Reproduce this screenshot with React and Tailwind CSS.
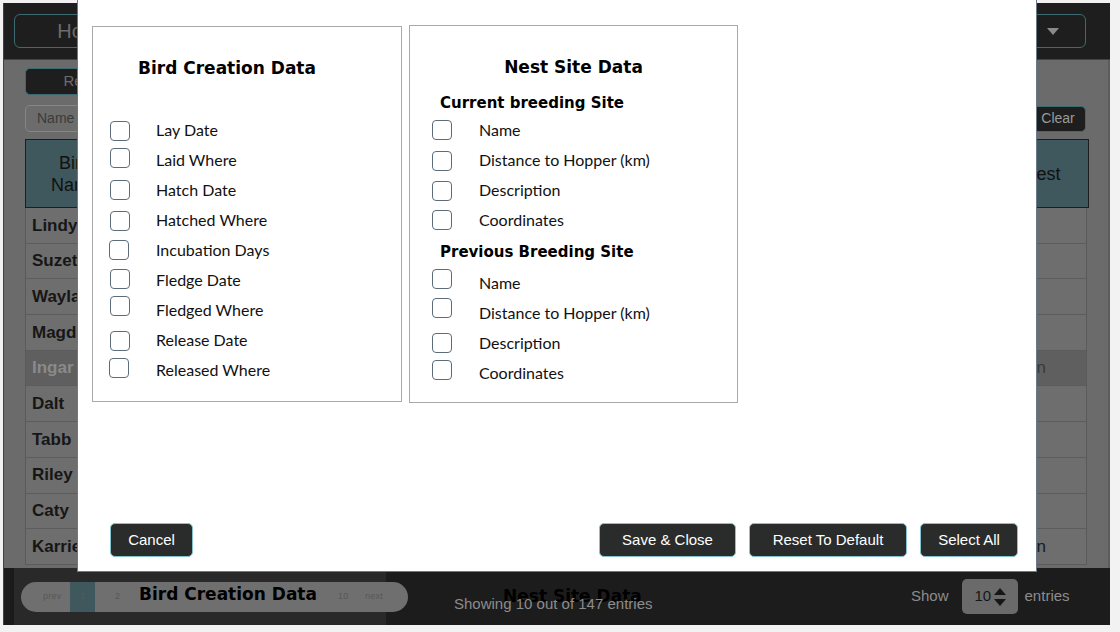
import React from 'react'

const birdFields = [
  { label: 'Lay Date', box: 'translate-y-[1px]' },
  { label: 'Laid Where', box: 'translate-y-[-2px]' },
  { label: 'Hatch Date', box: '' },
  { label: 'Hatched Where', box: 'translate-y-[1px]' },
  { label: 'Incubation Days', box: 'translate-x-[-1px]' },
  { label: 'Fledge Date', box: 'translate-y-[-1px]' },
  { label: 'Fledged Where', box: 'translate-y-[-4px]' },
  { label: 'Release Date', box: 'translate-y-[1px]' },
  { label: 'Released Where', box: 'translate-y-[-2px] translate-x-[-1px]' },
]

const currentSite = [
  { label: 'Name', box: '' },
  { label: 'Distance to Hopper (km)', box: 'translate-y-[1px]' },
  { label: 'Description', box: 'translate-y-[1px]' },
  { label: 'Coordinates', box: '' },
]

const previousSite = [
  { label: 'Name', box: 'translate-y-[-4px]' },
  { label: 'Distance to Hopper (km)', box: 'translate-y-[-5px]' },
  { label: 'Description', box: '' },
  { label: 'Coordinates', box: 'translate-y-[-3px]' },
]

const birds = [
  { name: 'Lindy', nest: '' },
  { name: 'Suzette', nest: '' },
  { name: 'Wayland', nest: '' },
  { name: 'Magdalen', nest: '' },
  { name: 'Ingar', nest: 'Green Lagoon', muted: true },
  { name: 'Dalt', nest: '' },
  { name: 'Tabb', nest: '' },
  { name: 'Riley', nest: '' },
  { name: 'Caty', nest: '' },
  { name: 'Karrie', nest: 'Green Lagoon' },
]

const Box = ({ className }) => (
  <span className={`block w-5 h-5 shrink-0 rounded-[4px] border-[1.5px] border-[#5d6c7b] bg-white ${className}`} />
)

const Field = ({ item, boxPad, labelPad }) => (
  <div className="flex items-center h-[30px]">
    <div className={boxPad}>
      <Box className={item.box} />
    </div>
    <span className={`${labelPad} text-[16px] text-[#111] font-['Lato',sans-serif]`}>{item.label}</span>
  </div>
)

const ModalButton = ({ children, w }) => (
  <button className={`${w} h-[34px] rounded-[5px] bg-[#2a2c2c] border border-[#86c3d0] text-white text-[15px] font-['Liberation_Sans',Arial,sans-serif]`}>
    {children}
  </button>
)

const ColumnsModal = () => (
  <div className="absolute left-[77px] top-0 w-[960px] h-[572px] bg-white border border-t-0 border-[#6b7a8a] flex flex-col">
    <div className="flex gap-[7px] pl-[14px] pt-[26px]">
      <div className="w-[310px] h-[376px] border border-[#a9a9a9]">
        <h2 className="pt-[29px] pl-[45px] h-[53px] text-[17px] leading-[24px] font-bold text-black font-['DejaVu_Sans',Verdana,sans-serif]">
          Bird Creation Data
        </h2>
        <div className="mt-[35px]">
          {birdFields.map((f, i) => (
            <Field key={i} item={f} boxPad="pl-[17px]" labelPad="ml-[26px]" />
          ))}
        </div>
      </div>
      <div className="w-[329px] h-[378px] border border-[#a9a9a9] -mt-px">
        <h2 className="pt-[29px] h-[53px] text-center text-[17px] leading-[24px] font-bold text-black font-['DejaVu_Sans',Verdana,sans-serif]">
          Nest Site Data
        </h2>
        <h3 className="mt-[14px] pl-[30px] h-5 text-[15px] leading-5 font-bold text-black font-['DejaVu_Sans',Verdana,sans-serif]">
          Current breeding Site
        </h3>
        <div className="mt-[2px]">
          {currentSite.map((f, i) => (
            <Field key={i} item={f} boxPad="pl-[22px]" labelPad="ml-[27px]" />
          ))}
        </div>
        <h3 className="mt-[7px] pl-[30px] h-5 text-[15px] leading-5 font-bold text-black font-['DejaVu_Sans',Verdana,sans-serif]">
          Previous Breeding Site
        </h3>
        <div className="mt-[6px]">
          {previousSite.map((f, i) => (
            <Field key={i} item={f} boxPad="pl-[22px]" labelPad="ml-[27px]" />
          ))}
        </div>
      </div>
    </div>
    <div className="mt-auto mb-[14px] flex items-center pl-[32px] pr-[18px]">
      <ModalButton w="w-[83px]">Cancel</ModalButton>
      <div className="flex-1" />
      <div className="flex gap-[13px]">
        <ModalButton w="w-[137px]">Save &amp; Close</ModalButton>
        <ModalButton w="w-[158px]">Reset To Default</ModalButton>
        <ModalButton w="w-[98px]">Select All</ModalButton>
      </div>
    </div>
  </div>
)

const BirdTable = () => (
  <div className="w-[1064px] font-['Liberation_Sans',Arial,sans-serif]">
    <div className="h-[69px] flex items-center bg-[#3e585d] border border-[#1e1e1e] text-[18px] leading-[22px] text-[#111]">
      <div className="w-[98px] text-center">Bird<br />Name</div>
      <div className="flex-1" />
      <div className="w-[92px] text-center">Nest</div>
    </div>
    <div className="border-l border-r border-[#5a5a5a] w-[1062px]">
      {birds.map((b, i) => (
        <div
          key={i}
          className={`h-[35.7px] flex items-center border-b border-[#5c5c5c] ${b.muted ? 'bg-[#5f5f5f] text-[#8a8a8a]' : 'bg-[#6e6e6e] text-[#161616]'}`}
        >
          <span className="pl-[6px] w-[98px] text-[17px] font-bold">{b.name}</span>
          <div className="flex-1" />
          <span className={`pr-[40px] text-[17px] ${b.muted ? 'text-[#3a3a3a]' : 'text-[#1a1a1a]'}`}>{b.nest}</span>
        </div>
      ))}
    </div>
  </div>
)

const Footer = () => (
  <footer className="relative h-[57px] flex bg-[#1c1c1c] font-['Liberation_Sans',Arial,sans-serif]">
    <div className="w-[10px] shrink-0 bg-[#1a1a1a]" />
    <div className="w-[372px] shrink-0 bg-[#292929] flex items-center">
      <div className="ml-[7px] shrink-0 relative z-10 w-[387px] h-[30px] rounded-full bg-[#6f6f6f] flex items-center text-[9px] text-[#575757] tracking-wide overflow-hidden">
        <span className="ml-[22px] w-[27px]">prev</span>
        <span className="w-[25px] h-full bg-[#3e585d] flex items-center justify-center">1</span>
        <span className="ml-[20px]">2</span>
        <div className="flex-1" />
        <span className="w-[27px]">10</span>
        <span className="w-[43px]">next</span>
      </div>
    </div>
    <div className="flex-1 flex items-center pl-[525px]">
      <span className="text-[15px] text-[#8c8c8c]">Show</span>
      <div className="ml-[13px] w-[56px] h-[35px] rounded-[5px] bg-[#6a6a6a] flex items-center pl-[13px] text-[15px] text-[#161616]">
        <span>10</span>
        <svg width="14" height="24" viewBox="0 0 14 24" className="ml-[2px]">
          <path d="M7 3 L13 10 L1 10 Z" fill="#161616" />
          <path d="M1 14 L13 14 L7 21 Z" fill="#161616" />
        </svg>
      </div>
      <span className="ml-[7px] text-[15px] text-[#8c8c8c]">entries</span>
    </div>
    <span className="absolute z-20 left-[135px] top-[14px] text-[17px] leading-[24px] font-bold text-black font-['DejaVu_Sans',Verdana,sans-serif]">
      Bird Creation Data
    </span>
    <span className="absolute z-20 left-[499px] top-[16px] text-[17px] leading-[24px] font-bold text-black font-['DejaVu_Sans',Verdana,sans-serif]">
      Nest Site Data
    </span>
    <span className="absolute z-30 left-[450px] top-[26px] text-[15px] leading-[20px] text-[#8c8c8c]">
      Showing 10 out of 147 entries
    </span>
  </footer>
)

export default function App() {
  return (
    <div className="relative w-[1120px] h-[632px] bg-[#f2f2f2] overflow-hidden">
      <div className="ml-[3px] mt-[3px] w-[1107px] h-[622px] flex flex-col border-l border-[#2d4a4e]">
        <header className="h-[57px] shrink-0 bg-[#1e1e1e] border-b border-[#30494d] flex items-center justify-between px-[10px] font-['Liberation_Sans',Arial,sans-serif]">
          <button className="w-[140px] h-[34px] rounded-[6px] border border-[#3d6a70] text-[20px] text-[#6c6c6c]">Home</button>
          <button className="w-[150px] h-[34px] rounded-[6px] border border-[#3d6a70] flex items-center justify-end pr-[26px] mr-[14px]">
            <svg width="12" height="7" viewBox="0 0 12 7">
              <path d="M0 0 L12 0 L6 7 Z" fill="#8a8a8a" />
            </svg>
          </button>
        </header>
        <main className="flex-1 bg-[#6b6b6b] border-r-2 border-[#5c5c5c] pl-[21px] pt-[8px] font-['Liberation_Sans',Arial,sans-serif]">
          <button className="w-[116px] h-[27px] rounded-[5px] bg-[#1e1e1e] border border-[#3d6a70] text-[15px] text-[#6c6c6c]">Reset</button>
          <div className="mt-[10px] flex items-center w-[1061px]">
            <div className="w-[200px] h-[27px] rounded-[5px] border border-[#868686] bg-[#6c6c6c] pl-[11px] flex items-center text-[14px] text-[#3b3b3b]">Name</div>
            <div className="flex-1" />
            <button className="w-[56px] h-[26px] rounded-[5px] bg-[#1e1e1e] border border-[#3d6a70] text-[14px] text-[#9a9a9a]">Clear</button>
          </div>
          <div className="mt-[7px]">
            <BirdTable />
          </div>
        </main>
        <Footer />
      </div>
      <ColumnsModal />
    </div>
  )
}
